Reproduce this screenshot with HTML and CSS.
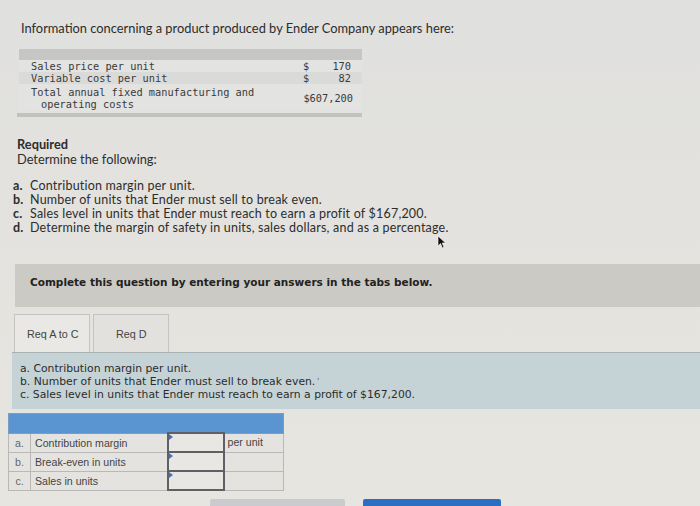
FILE: index.html
```html
<!DOCTYPE html>
<html>
<head>
<meta charset="utf-8">
<link rel="stylesheet" href="styles.css">
</head>
<body>
<div class="page">
  <p class="intro">Information concerning a product produced by Ender Company appears here:</p>

  <div class="data">
    <div class="data-head"></div>
    <div class="data-row shade-a">
      <span class="lbl">Sales price per unit</span><span class="cur">$</span><span class="amt">170</span>
    </div>
    <div class="data-row shade-b">
      <span class="lbl">Variable cost per unit</span><span class="cur">$</span><span class="amt">82</span>
    </div>
    <div class="data-row tall shade-a">
      <span class="lbl">Total annual fixed manufacturing and<br><span class="indent">operating costs</span></span><span class="full">$607,200</span>
    </div>
    <div class="data-foot"></div>
  </div>

  <div class="required">
    <div class="req-title">Required</div>
    <div class="req-sub">Determine the following:</div>
  </div>

  <ol class="tasks">
    <li><b>a.</b><span>Contribution margin per unit.</span></li>
    <li><b>b.</b><span>Number of units that Ender must sell to break even.</span></li>
    <li><b>c.</b><span>Sales level in units that Ender must reach to earn a profit of $167,200.</span></li>
    <li><b>d.</b><span>Determine the margin of safety in units, sales dollars, and as a percentage.</span></li>
  </ol>

  <svg class="cursor" width="10" height="14" viewBox="0 0 10 14"><path d="M1 1 L1 11 L3.5 8.6 L5.4 13 L7 12.3 L5.2 8 L8.6 8 Z" fill="#111" stroke="#fff" stroke-width="0.6"/></svg>

  <div class="band">Complete this question by entering your answers in the tabs below.</div>

  <div class="tabs">
    <div class="tab active">Req A to C</div>
    <div class="tab">Req D</div>
  </div>

  <div class="panel">
    <div>a. Contribution margin per unit.</div>
    <div>b. Number of units that Ender must sell to break even.<span class="tick">'</span></div>
    <div>c. Sales level in units that Ender must reach to earn a profit of $167,200.</div>
  </div>

  <table class="answers">
    <colgroup>
      <col class="c-let">
      <col class="c-name">
      <col class="c-inp">
      <col class="c-unit">
    </colgroup>
    <tr class="ahead"><td colspan="4"></td></tr>
    <tr><td class="let">a.</td><td class="name">Contribution margin</td><td class="inp"></td><td class="unit">per unit</td></tr>
    <tr><td class="let">b.</td><td class="name">Break-even in units</td><td class="inp"></td><td class="unit"></td></tr>
    <tr><td class="let">c.</td><td class="name">Sales in units</td><td class="inp"></td><td class="unit"></td></tr>
  </table>

  <div class="buttons">
    <div class="btn prev"></div>
    <div class="btn next"></div>
  </div>
</div>
</body>
</html>
```

FILE: styles.css
```css
html, body {
  margin: 0;
  padding: 0;
}
body {
  background: linear-gradient(180deg, #e0e0de 0%, #e3e2de 40%, #e7e5e0 100%);
  width: 700px;
  height: 506px;
  overflow: hidden;
}
.page {
  position: relative;
  height: 506px;
}
.intro {
  margin: 0;
  padding: 20px 0 0 21px;
  font-family: Lato, "Liberation Sans", sans-serif;
  font-size: 12.85px;
  line-height: 16px;
  color: #2d2d2d;
}
.data {
  margin: 13px 0 0 19px;
  width: 343px;
  font-family: "DejaVu Sans Mono", monospace;
  font-size: 10.3px;
  color: #3a3a3a;
}
.data-head {
  height: 11px;
  background: #c6c6c4;
}
.data-row {
  display: flex;
  align-items: center;
  height: 12px;
  line-height: 12px;
}
.data-row.tall {
  height: 26px;
  line-height: 12px;
  padding-top: 1px;
}
.shade-a { background: #e3e3e1; }
.shade-b { background: #dadad8; }
.lbl {
  padding-left: 12px;
  width: 272px;
}
.indent { padding-left: 10px; }
.cur {
  width: 24px;
}
.amt {
  width: 24px;
  text-align: right;
}
.full {
  width: 50px;
  text-align: right;
}
.data-foot {
  margin-top: 2px;
  margin-left: -2px;
  height: 4px;
  background: #c2c2c0;
}
.required {
  margin: 19px 0 0 17px;
  font-family: Lato, "Liberation Sans", sans-serif;
  font-size: 12.8px;
  color: #2d2d2d;
}
.req-title {
  font-weight: bold;
  line-height: 16px;
}
.req-sub {
  line-height: 15px;
}
.tasks {
  list-style: none;
  margin: 12px 0 0 0;
  padding: 0 0 0 13px;
  font-family: Lato, "Liberation Sans", sans-serif;
  font-size: 12.5px;
  letter-spacing: 0.2px;
  line-height: 14px;
  color: #2d2d2d;
}
.tasks li {
  display: flex;
  height: 14px;
}
.tasks b {
  width: 17px;
  font-weight: bold;
}
.cursor {
  position: absolute;
  left: 437px;
  top: 235px;
}
.band {
  margin: 29px 0 0 15px;
  height: 43px;
  box-sizing: border-box;
  padding: 11px 0 0 15px;
  background: #cbcac5;
  font-family: "DejaVu Sans", Verdana, sans-serif;
  font-weight: bold;
  font-size: 10.5px;
  line-height: 14px;
  color: #222;
}
.tabs {
  display: flex;
  gap: 3px;
  margin: 7px 0 0 14px;
  height: 38px;
}
.tab {
  width: 76px;
  box-sizing: border-box;
  border: 1px solid #c4c4c2;
  border-bottom: none;
  background: #e2e1dd;
  font-family: "Liberation Sans", Arial, sans-serif;
  font-size: 10.8px;
  color: #444;
  padding: 13px 0 0 12px;
}
.tab + .tab {
  padding-left: 22px;
}
.tab.active {
  background: #e9e8e4;
}
.panel {
  margin-left: 12px;
  height: 57px;
  box-sizing: border-box;
  border-top: 1px solid #a9b0b2;
  background: #c5d3d6;
  padding: 9px 0 0 8px;
  font-family: "DejaVu Sans", Verdana, sans-serif;
  font-size: 10.8px;
  line-height: 13px;
  color: #2c2c2c;
}
.tick {
  font-size: 7px;
  vertical-align: top;
  margin-left: 2px;
}
.answers {
  margin: 4px 0 0 8px;
  border-collapse: collapse;
  width: 275px;
  table-layout: fixed;
  font-family: "Liberation Sans", Arial, sans-serif;
  font-size: 10.6px;
  color: #444;
}
.c-let { width: 22px; }
.c-name { width: 137px; }
.c-inp { width: 56px; }
.c-unit { width: 60px; }
.answers td {
  border: 1px solid #b8b8b6;
  height: 17px;
  padding: 0;
  background: #e4e3df;
  white-space: nowrap;
}
.ahead td {
  background: #5a95d2;
  border-color: #7a9ec2;
  height: 18px;
}
.let {
  text-align: center;
  color: #666;
}
.name {
  padding-left: 4px !important;
}
.inp {
  position: relative;
  border: 2px solid #5e6066 !important;
  background: #e8e7e3 !important;
}
.inp::before {
  content: "";
  position: absolute;
  left: 0;
  top: 0;
  border-left: 4px solid #3b76c0;
  border-top: 3px solid transparent;
  border-bottom: 3px solid transparent;
}
.unit {
  padding-left: 3px !important;
  vertical-align: top;
  line-height: 16px;
}
.buttons {
  display: flex;
  margin: 8px 0 0 210px;
  gap: 18px;
}
.btn {
  height: 12px;
  border-radius: 2px 2px 0 0;
}
.prev {
  width: 135px;
  background: #c9cbcd;
}
.next {
  width: 138px;
  background: #2c6ec2;
}
```
